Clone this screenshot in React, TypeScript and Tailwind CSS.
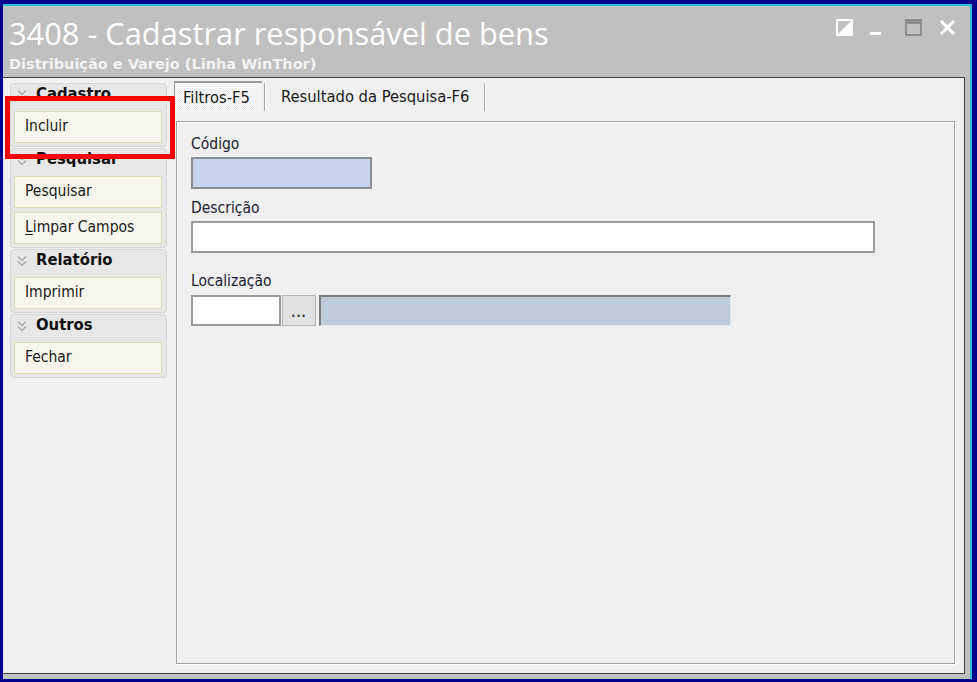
import type { ReactNode } from "react"

type Group = { title: string; items: ReactNode[] }

const groups: Group[] = [
  { title: "Cadastro", items: ["Incluir"] },
  {
    title: "Pesquisar",
    items: [
      "Pesquisar",
      <>
        <span className="underline underline-offset-2">L</span>impar Campos
      </>,
    ],
  },
  { title: "Relatório", items: ["Imprimir"] },
  { title: "Outros", items: ["Fechar"] },
]

const ui = "font-['DejaVu_Sans_Condensed','Liberation_Sans',sans-serif]"

function Chevrons() {
  return (
    <svg width="10" height="12" viewBox="0 0 10 12" className="shrink-0">
      <path d="M1 1.5 L5 5.5 L9 1.5 M1 6.5 L5 10.5 L9 6.5" fill="none" stroke="#aaaaaa" strokeWidth="1.5" />
    </svg>
  )
}

function WindowButtons() {
  return (
    <div className="flex items-start pt-[13px] pr-[14px]">
      <svg width="17" height="17" viewBox="0 0 17 17">
        <rect x="1" y="1" width="15" height="15" fill="none" stroke="#fff" strokeWidth="2" />
        <path d="M2 15 L15 2 L15 15 Z" fill="#fff" />
      </svg>
      <svg width="11" height="17" viewBox="0 0 11 17" className="ml-[17px]">
        <rect x="0" y="13" width="11" height="3" fill="#fff" />
      </svg>
      <svg width="17" height="17" viewBox="0 0 17 17" className="ml-[24px]">
        <rect x="1" y="1" width="15" height="15" fill="none" stroke="#8c8c8c" strokeWidth="2" />
        <rect x="1" y="1" width="15" height="4" fill="#8c8c8c" />
      </svg>
      <svg width="17" height="17" viewBox="0 0 17 17" className="ml-[17px]">
        <path d="M2 2 L15 15 M15 2 L2 15" stroke="#fff" strokeWidth="3" />
      </svg>
    </div>
  )
}

function SideGroup({ group }: { group: Group }) {
  return (
    <div className="rounded-[4px] border border-[#d6d6d6] bg-[#e7e7e7] pl-[3px] pr-[4px] pb-[3px]">
      <div className="flex h-[27px] items-start gap-[9px] pl-[3px] pt-[5px]">
        <Chevrons />
        <span className="-mt-[7px] text-[16.5px] leading-[24px] font-bold text-[#111]">{group.title}</span>
      </div>
      <div className="flex flex-col gap-[4px]">
        {group.items.map((item, i) => (
          <div
            key={i}
            className="flex h-[32px] items-center border border-[#dedab8] bg-[#f7f6ee] pl-[10px] text-[15.5px] text-[#1a1a1a]"
          >
            {item}
          </div>
        ))}
      </div>
    </div>
  )
}

function Field({ label, className, children }: { label: string; className?: string; children: ReactNode }) {
  return (
    <div className={className}>
      <div className="h-[18px] text-[15.5px] leading-[18px] text-[#1c1c34]">{label}</div>
      {children}
    </div>
  )
}

export default function App() {
  return (
    <div className={`flex h-[682px] w-[977px] flex-col bg-[#00008e] pt-[4px] pr-[5px] pb-[3px] pl-[3px] ${ui}`}>
      <div className="relative flex flex-1 flex-col border-t-2 border-r-2 border-[#22c4d4] bg-[#c0c0c0]">
        {/* title bar */}
        <div className="flex h-[71px] justify-between">
          <div className="flex flex-col pl-[6px] pt-[12px]">
            <div className="font-['Open_Sans',sans-serif] text-[30.8px] leading-none text-white">
              3408 - Cadastrar responsável de bens
            </div>
            <div className="mt-[8px] font-['DejaVu_Sans',sans-serif] text-[14.5px] leading-none font-bold text-[#f2f2f2]">
              Distribuição e Varejo (Linha WinThor)
            </div>
          </div>
          <WindowButtons />
        </div>

        {/* client area */}
        <div className="mr-[5px] mb-[5px] flex flex-1 border-t border-r border-b border-[#3c3c3c] bg-[#f0f0f0] pl-[7px]">
          <div className="mt-[5px] flex w-[157px] flex-col gap-[1px]">
            {groups.map((g) => (
              <SideGroup key={g.title} group={g} />
            ))}
          </div>

          <div className="mt-[3px] mr-[9px] mb-[9px] ml-[7px] flex flex-1 flex-col">
            <div className="flex h-[32px] items-stretch text-[16.4px] text-[#1a1a1a]">
              <div className="flex w-[88px] items-center border-t-2 border-l border-[#9c9c9c] bg-[#f5f5f5] bg-[repeating-conic-gradient(#fbfbfb_0_25%,#ececec_0_50%)] bg-[length:2px_2px] pl-[8px]">
                Filtros-F5
              </div>
              <div className="my-[2px] ml-[2px] w-[2px] border-l border-[#a8a8a8] bg-white" />
              <div className="flex items-center px-[15px]">Resultado da Pesquisa-F6</div>
              <div className="my-[2px] w-[2px] border-l border-[#a8a8a8] bg-white" />
            </div>

            <div className="mt-[8px] ml-[2px] flex-1 border border-[#a0a0a0] pt-[13px] pl-[14px] shadow-[inset_1px_1px_0_#fff,1px_1px_0_#fff]">
              <Field label="Código">
                <div className="mt-[4px] h-[32px] w-[181px] border-2 border-[#8e8e8e] bg-[#c6d4ee]" />
              </Field>
              <Field label="Descrição" className="mt-[10px]">
                <div className="mt-[4px] h-[32px] w-[684px] border-2 border-[#9a9a9a] bg-white" />
              </Field>
              <Field label="Localização" className="mt-[19px]">
                <div className="mt-[5px] flex h-[31px] items-stretch">
                  <div className="w-[90px] border-2 border-[#9a9a9a] bg-white" />
                  <div className="ml-[1px] flex w-[34px] items-end justify-center border border-[#b4b4b4] bg-[#e2e2e2] pb-[6px] text-[12px] leading-none font-bold tracking-[1px] text-[#333]">
                    ...
                  </div>
                  <div className="ml-[3px] w-[412px] border-t-2 border-l-2 border-r border-b border-t-[#7c7c7c] border-l-[#7c7c7c] border-r-[#e4e4e4] border-b-[#e4e4e4] bg-[#bfcbd8]" />
                </div>
              </Field>
            </div>
          </div>
        </div>

        {/* highlight around the Incluir action */}
        <div className="absolute top-[90px] left-[2px] h-[63px] w-[170px] border-[5px] border-[#ff0000]" />
      </div>
    </div>
  )
}
